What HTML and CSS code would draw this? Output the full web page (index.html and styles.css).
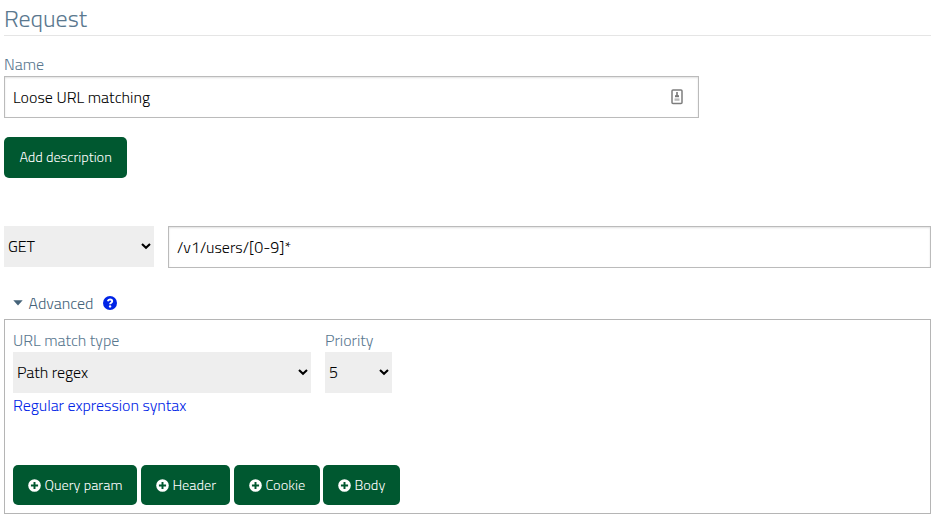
FILE: index.html
```html
<!DOCTYPE html>
<html lang="en">
<head>
<meta charset="utf-8">
<title>Request</title>
<link rel="stylesheet" href="styles.css">
</head>
<body>
<svg class="defs" width="0" height="0">
  <symbol id="chevron" viewBox="0 0 10 8"><path d="M1 2l4 3.8L9 2" fill="none" stroke="#000" stroke-width="2.1"/></symbol>
  <symbol id="plus" viewBox="0 0 12 12"><circle cx="6" cy="6" r="5.8" fill="#fff"/><path d="M6 2.7v6.6M2.7 6h6.6" stroke="#005830" stroke-width="1.8"/></symbol>
</svg>
<main class="page">
  <h1 class="title">Request</h1>
  <label class="label name-label" for="name">Name</label>
  <div class="field">
    <input class="input" id="name" type="text" value="Loose URL matching">
    <svg class="contact" viewBox="0 0 12 16"><rect x="1" y="1" width="10" height="13.5" rx="1" fill="none" stroke="#7d7d7d" stroke-width="1.5"/><path d="M6 3v4" stroke="#777" stroke-width="1.6"/><path d="M4 7.2h4" stroke="#777" stroke-width="2"/><path d="M3.5 10.6h5" stroke="#bbb" stroke-width="2.4"/></svg>
  </div>
  <button class="button describe">Add description</button>
  <div class="url-row">
    <div class="select method">
      <select aria-label="Method"><option>GET</option></select>
      <svg class="chevron"><use href="#chevron"/></svg>
    </div>
    <input class="input url" type="text" value="/v1/users/[0-9]*" aria-label="URL">
  </div>
  <div class="advanced">
    <svg class="caret" viewBox="0 0 10 6"><path d="M.3 .3h9.4L5 5.6z" fill="#456379"/></svg>
    <span class="advanced-text">Advanced</span>
    <svg class="help" viewBox="0 0 14 14"><circle cx="7" cy="7" r="7" fill="#0024e6"/><path d="M4.8 5.3C5.1 3.9 6 3.5 7 3.5c1.3 0 2.2.7 2.2 1.8C9.2 6.7 7.1 6.7 7.1 8.2" fill="none" stroke="#fff" stroke-width="1.9"/><circle cx="7.1" cy="10.4" r="1.2" fill="#fff"/></svg>
  </div>
  <section class="panel">
    <div class="options">
      <div class="option type">
        <label class="label" for="match">URL match type</label>
        <div class="select">
          <select id="match"><option>Path regex</option></select>
          <svg class="chevron"><use href="#chevron"/></svg>
        </div>
        <a class="link" href="#">Regular expression syntax</a>
      </div>
      <div class="option priority">
        <label class="label" for="priority">Priority</label>
        <div class="select">
          <select id="priority"><option>5</option></select>
          <svg class="chevron"><use href="#chevron"/></svg>
        </div>
      </div>
    </div>
    <div class="actions">
      <button class="button b-query"><svg class="plus"><use href="#plus"/></svg>Query param</button>
      <button class="button b-header"><svg class="plus"><use href="#plus"/></svg>Header</button>
      <button class="button b-cookie"><svg class="plus"><use href="#plus"/></svg>Cookie</button>
      <button class="button b-body"><svg class="plus"><use href="#plus"/></svg>Body</button>
    </div>
  </section>
</main>
</body>
</html>
```
FILE: styles.css
```css
* { box-sizing: border-box; }
body { margin: 0; background: #fff; overflow: hidden; }
body, input, select, button { font-family: "Titillium Web", Roboto, "Open Sans", sans-serif; font-size: 16px; font-weight: 300; letter-spacing: -.04px; }
svg { display: block; flex: none; }
.defs { position: absolute; }
.page { padding: 0 3px 0 4px; height: 518px; display: flex; flex-direction: column; align-items: stretch; }
.title { margin: 0; height: 36px; border-bottom: 1px solid #e5e5e5; font-size: 24px; font-weight: 300; line-height: 37px; color: #5a788f; }
.label { display: block; height: 24px; line-height: 24px; color: #5a788f; white-space: nowrap; }
.name-label { margin-top: 16px; }
.field { position: relative; width: 695px; height: 42px; }
.input { width: 100%; height: 42px; margin: 0; padding: 0 8px; border: 1px solid #bbb; border-radius: 0; background: #fff; box-shadow: inset 0 1px 2px rgba(0,0,0,.12); color: #000; outline: 0; letter-spacing: 0; }
.contact { position: absolute; left: 667px; top: 13px; width: 12px; height: 16px; }
.button { display: flex; align-items: center; justify-content: flex-start; height: 40px; margin: 0; padding: 0 0 0 15.4px; border: 0; border-radius: 5px; background: #005830; color: #fff; font-size: 14.4px; letter-spacing: 0; white-space: nowrap; }
.describe { width: 123px; height: 41px; margin-top: 19px; padding-bottom: 1px; letter-spacing: -.04px; }
.url-row { display: flex; gap: 14px; margin-top: 48px; height: 42px; }
.select { position: relative; height: 41px; background: #eee; }
.select select { appearance: none; width: 100%; height: 100%; padding: 0 4px 2px; margin: 0; border: 0; border-radius: 0; background: transparent; color: #000; outline: 0; }
.chevron { position: absolute; right: 3px; top: 16px; width: 10px; height: 8px; }
.method { flex: none; width: 150px; }
.url { flex: 1; min-width: 0; }
.advanced { display: flex; align-items: center; height: 24px; margin-top: 23px; padding-left: 8.6px; color: #456379; }
.caret { width: 10px; height: 6px; margin-right: 6px; }
.advanced-text { width: 74.4px; white-space: nowrap; }
.help { width: 14px; height: 14px; }
.panel { height: 195px; margin-top: 4px; padding: 8px; border: 1px solid #b5b5b5; }
.options { display: flex; gap: 14px; height: 137px; }
.type { width: 298px; }
.priority { width: 67px; }
.link { display: block; line-height: 25px; color: #0024e6; text-decoration: none; white-space: nowrap; }
.actions { display: flex; }
.plus { width: 13px; height: 13px; margin-right: 3px; }
.b-query { width: 124px; margin-right: 4px; }
.b-header { width: 89px; margin-right: 4px; }
.b-cookie { width: 86px; margin-right: 3px; }
.b-body { width: 77px; }
```
